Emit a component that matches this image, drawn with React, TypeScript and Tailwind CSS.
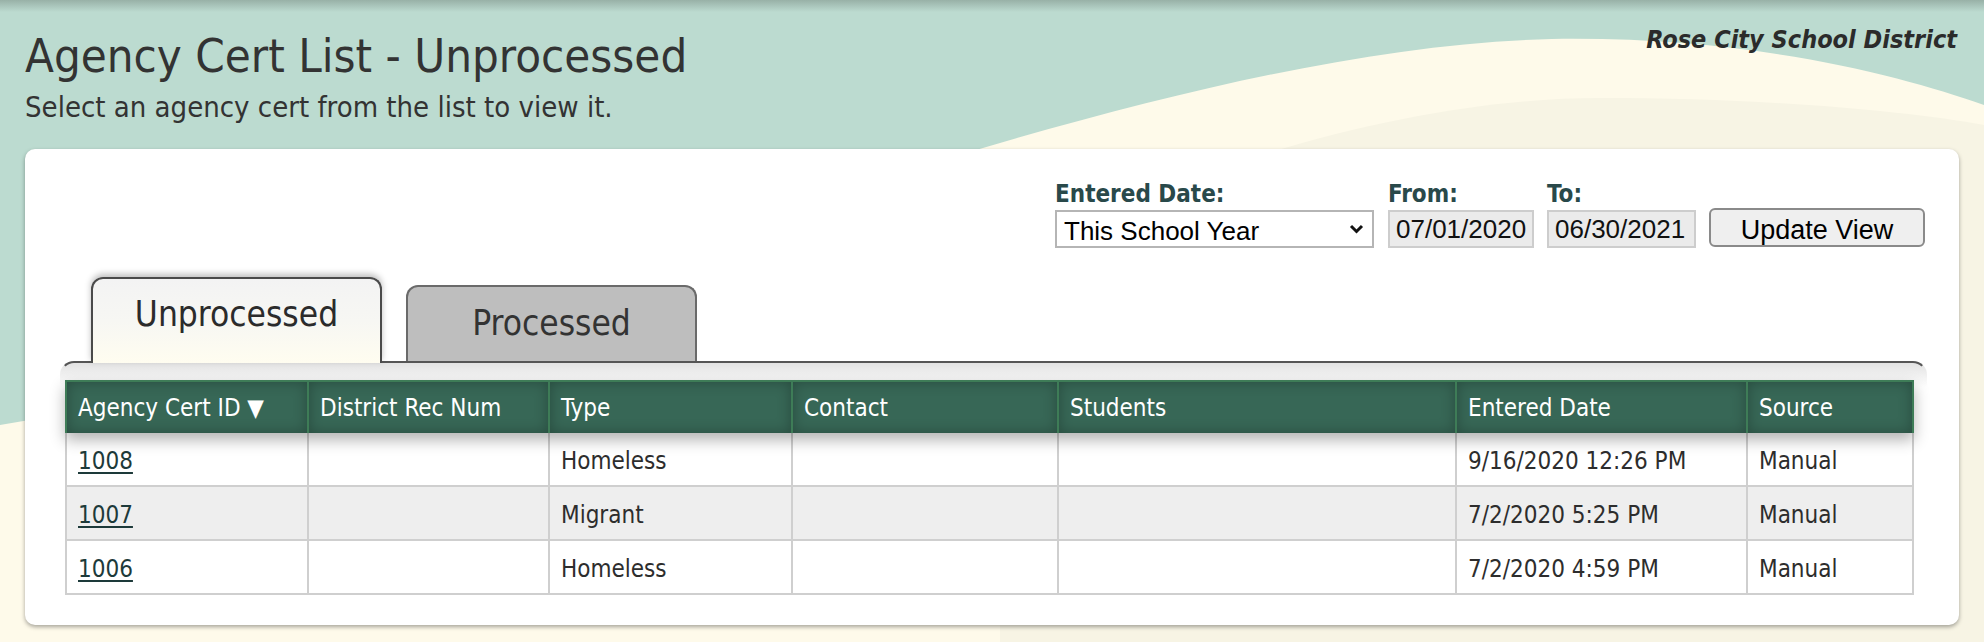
import React from "react";

const cond = "font-['DejaVu_Sans',sans-serif] [font-stretch:condensed]";
const arial = "font-['Liberation_Sans',Arial,sans-serif]";

const columns = [
  { label: "Agency Cert ID ▼", w: "w-[242px]" },
  { label: "District Rec Num", w: "w-[241px]" },
  { label: "Type", w: "w-[243px]" },
  { label: "Contact", w: "w-[266px]" },
  { label: "Students", w: "w-[398px]" },
  { label: "Entered Date", w: "w-[291px]" },
  { label: "Source", w: "w-[168px]" },
];

const certs = [
  { id: "1008", type: "Homeless", entered: "9/16/2020 12:26 PM", source: "Manual" },
  { id: "1007", type: "Migrant", entered: "7/2/2020 5:25 PM", source: "Manual" },
  { id: "1006", type: "Homeless", entered: "7/2/2020 4:59 PM", source: "Manual" },
];

const Background = () => (
  <svg className="absolute inset-0 h-full w-full" viewBox="0 0 1984 642" preserveAspectRatio="none">
    <path d="M0 425 C480 350 1100 50 1552 39 C1750 36 1900 75 1984 105 L1984 642 L0 642 Z" fill="#fefaea" />
    <path d="M1000 260 C1200 160 1420 98 1600 98 C1760 98 1900 110 1984 125 L1984 642 L1000 642 Z" fill="#f7f4e4" />
  </svg>
);

export default function App() {
  const cells = (c: (typeof certs)[number]) => [
    <a href="#" className="text-[#1d3a3a] underline decoration-[2px] underline-offset-[3px]">{c.id}</a>,
    "",
    c.type,
    "",
    "",
    c.entered,
    c.source,
  ];

  return (
    <div className="relative h-[642px] w-full overflow-hidden bg-[#bcdbd0]">
      <Background />
      <div className="absolute inset-x-0 top-0 h-[12px] bg-linear-to-b from-[#98b1a7] to-transparent" />

      <div className={`relative ${cond}`}>
        <header className="flex items-start justify-between pl-[25px] pr-[27px]">
          <div>
            <h1 className="mt-[32px] text-[47px] leading-none text-[#333]">Agency Cert List - Unprocessed</h1>
            <p className="mt-[14px] text-[29px] leading-none text-[#333]">Select an agency cert from the list to view it.</p>
          </div>
          <div className="mt-[27px] text-[25px] font-bold italic leading-none text-[#2b2b2b]">Rose City School District</div>
        </header>

        <section className="mx-[25px] mt-[27px] flex h-[476px] flex-col rounded-[10px] bg-white pt-[33px] shadow-[0_2px_4px_rgba(0,0,0,0.35)]">
          <div className="flex items-end justify-end gap-[13px] pr-[34px]">
            <label className="mr-[1px] flex flex-col gap-[4px]">
              <span className="text-[24px] font-bold leading-none text-[#29494a]">Entered Date:</span>
              <div className="relative h-[38px] w-[319px]">
                <select
                  defaultValue="year"
                  className={`h-full w-full appearance-none border-2 border-[#b5b5b5] bg-white pl-[7px] text-[26px] text-black ${arial}`}
                >
                  <option value="year">This School Year</option>
                  <option value="last">Last School Year</option>
                  <option value="custom">Custom Range</option>
                </select>
                <svg className="pointer-events-none absolute right-[10px] top-[14px]" width="15" height="10" viewBox="0 0 15 10">
                  <path d="M2 2 L7.5 7.5 L13 2" fill="none" stroke="#111" strokeWidth="3" />
                </svg>
              </div>
            </label>
            <label className="flex flex-col gap-[4px]">
              <span className="text-[24px] font-bold leading-none text-[#29494a]">From:</span>
              <input
                readOnly
                value="07/01/2020"
                className={`h-[38px] w-[146px] border-2 border-[#cdcdcd] bg-[#ebebeb] pl-[6px] text-[26px] text-[#111] ${arial}`}
              />
            </label>
            <label className="flex flex-col gap-[4px]">
              <span className="text-[24px] font-bold leading-none text-[#29494a]">To:</span>
              <input
                readOnly
                value="06/30/2021"
                className={`h-[38px] w-[149px] border-2 border-[#cdcdcd] bg-[#ebebeb] pl-[6px] text-[26px] text-[#111] ${arial}`}
              />
            </label>
            <button
              className={`mb-[1px] h-[39px] w-[216px] rounded-[6px] border-2 border-[#8a8a8a] bg-[#efefef] text-[27px] text-black ${arial}`}
            >
              Update View
            </button>
          </div>

          <div className="ml-[35px] mr-[32px] mt-[29px] flex flex-1 flex-col">
            <div className="flex items-end gap-[24px] pl-[31px]">
              <div className="relative z-10 -mb-[2px] h-[86px] w-[291px] rounded-t-[12px] border-x-2 border-t-2 border-[#4a4a4a] bg-linear-to-b from-[#f3f3f3] via-[#f7f7f3] to-[#fffdf0] pt-[18px] text-center text-[35px] leading-none text-[#2b2b2b] shadow-[0_-3px_6px_rgba(0,0,0,0.25)]">
                Unprocessed
              </div>
              <div className="h-[76px] w-[291px] rounded-t-[12px] border-x-2 border-t-2 border-[#6a6a6a] bg-[#bebebe] pt-[19px] text-center text-[35px] leading-none text-[#333]">
                Processed
              </div>
            </div>

            <div className="flex-1 rounded-t-[14px] border-x-2 border-t-2 border-x-transparent border-t-[#555] bg-[linear-gradient(to_bottom,#e2e2e2,#ffffff_24px)] pl-[3px] pt-[17px]">
              <div className="relative z-10 flex h-[53px] w-[1849px] bg-[#376756] shadow-[0_7px_14px_rgba(0,0,0,0.3)]">
                {columns.map((col, i) => (
                  <div
                    key={col.label}
                    className={`${col.w} flex shrink-0 items-center border-l-2 border-t-2 border-[#3e7c57] pl-[11px] text-[24px] text-white shadow-[inset_0_0_14px_rgba(0,0,0,0.28)] ${i === columns.length - 1 ? "border-r-2" : ""}`}
                  >
                    {col.label}
                  </div>
                ))}
              </div>
              {certs.map((c, r) => (
                <div key={c.id} className={`flex h-[54px] w-[1849px] ${r === 1 ? "bg-[#eeeeee]" : "bg-white"}`}>
                  {cells(c).map((v, i) => (
                    <div
                      key={i}
                      className={`${columns[i].w} flex shrink-0 items-center border-b-2 border-l-2 border-[#cfcfcf] pl-[11px] pt-[3px] text-[24px] text-[#2d2d2d] ${i === columns.length - 1 ? "border-r-2" : ""}`}
                    >
                      {v}
                    </div>
                  ))}
                </div>
              ))}
            </div>
          </div>
        </section>
      </div>
    </div>
  );
}
